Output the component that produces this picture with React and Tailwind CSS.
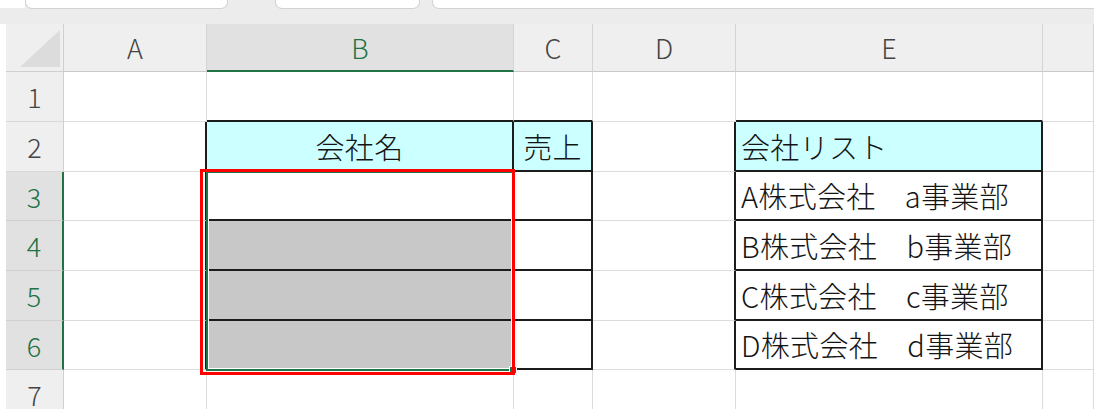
import React from 'react';

const COLS = [
  { key: 'A', width: 'w-[143px]' },
  { key: 'B', width: 'w-[307px]' },
  { key: 'C', width: 'w-[79px]' },
  { key: 'D', width: 'w-[143px]' },
  { key: 'E', width: 'w-[307px]' },
  { key: 'F', width: 'w-[51px]' },
];

const ROWS = [
  { n: 1, height: 'h-[50px]' },
  { n: 2, height: 'h-[50px]' },
  { n: 3, height: 'h-[49px]', selected: true },
  { n: 4, height: 'h-[50px]', selected: true },
  { n: 5, height: 'h-[50px]', selected: true },
  { n: 6, height: 'h-[49px]', selected: true },
  { n: 7, height: 'h-[50px]' },
];

// cells with a black right / bottom border
const BLACK_RIGHT = ['A2', 'A3', 'A4', 'A5', 'A6', 'B2', 'B3', 'B4', 'B5', 'B6', 'C2', 'C3', 'C4', 'C5', 'C6', 'D2', 'D3', 'D4', 'D5', 'D6', 'E2', 'E3', 'E4', 'E5', 'E6'];
const BLACK_BOTTOM = ['B1', 'C1', 'E1', 'B2', 'B3', 'B4', 'B5', 'B6', 'C2', 'C3', 'C4', 'C5', 'C6', 'E2', 'E3', 'E4', 'E5', 'E6'];

const CELLS = {
  B2: { text: '会社名', align: 'center', fill: 'bg-[#ccffff]' },
  C2: { text: '売上', align: 'center', fill: 'bg-[#ccffff]' },
  E2: { text: '会社リスト', align: 'left', fill: 'bg-[#ccffff]' },
  E3: { text: 'A株式会社　a事業部', align: 'left' },
  E4: { text: 'B株式会社　b事業部', align: 'left' },
  E5: { text: 'C株式会社　c事業部', align: 'left' },
  E6: { text: 'D株式会社　d事業部', align: 'left' },
  B4: { fill: 'bg-[#c8c8c8]' },
  B5: { fill: 'bg-[#c8c8c8]' },
  B6: { fill: 'bg-[#c8c8c8]' },
};

const Cell = ({ id, width }) => {
  const cell = CELLS[id] || {};
  const right = BLACK_RIGHT.includes(id) ? 'border-r-2 border-r-[#1c1c1c]' : 'border-r border-r-[#dcdcdc]';
  const bottom = BLACK_BOTTOM.includes(id) ? 'border-b-2 border-b-[#1c1c1c]' : 'border-b border-b-[#dcdcdc]';
  const align = cell.align === 'center' ? 'justify-center' : 'justify-start pl-[5px]';
  return (
    <div className={`${width} h-full shrink-0 flex items-center ${align} ${right} ${bottom} ${cell.fill || 'bg-white'}`}>
      {cell.text && <span className="text-[29px] font-light leading-none text-[#141414] whitespace-nowrap tracking-[0.3px]">{cell.text}</span>}
    </div>
  );
};

const Tabs = () => (
  <div className="flex h-[24px] items-start bg-[#ececec]">
    <div className="h-[8px] w-[25px] bg-white" />
    <div className="h-[9px] w-[203px] bg-white border-b border-l border-r border-[#d2d2d2] rounded-bl-[7px] rounded-br-[7px]" />
    <div className="w-[47px]" />
    <div className="h-[9px] w-[145px] bg-white border-b border-l border-r border-[#d2d2d2] rounded-bl-[7px] rounded-br-[7px]" />
    <div className="w-[12px]" />
    <div className="h-[9px] flex-1 bg-white border-b border-l border-[#d2d2d2] rounded-bl-[7px]" />
  </div>
);

const ColumnHeader = () => (
  <div className="flex h-[48px]">
    <div className="w-[6px] shrink-0 bg-white" />
    <div className="w-[58px] shrink-0 relative bg-[#efefef] border-r border-b border-[#cfcfcf]">
      <svg className="absolute left-0 top-0" width="58" height="48" viewBox="0 0 58 48">
        <polygon points="14,43 54,43 54,6" fill="#dcdcdc" />
      </svg>
    </div>
    {COLS.map(col => (
      col.key === 'B' ? (
        <div key={col.key} className={`${col.width} shrink-0 flex items-center justify-center bg-[#e1e1e1] border-r border-r-[#d4d4d4] border-b-2 border-b-[#217346]`}>
          <span className="text-[27px] font-light leading-none text-[#217346]">{col.key}</span>
        </div>
      ) : (
        <div key={col.key} className={`${col.width} shrink-0 flex items-center justify-center bg-[#efefef] border-r border-r-[#d4d4d4] border-b border-b-[#c9c9c9]`}>
          <span className="text-[27px] font-light leading-none text-[#444444]">{col.key === 'F' ? '' : col.key}</span>
        </div>
      )
    ))}
  </div>
);

const Row = ({ row }) => (
  <div className={`flex ${row.height}`}>
    <div className="w-[6px] shrink-0 bg-white" />
    {row.selected ? (
      <div className="w-[58px] shrink-0 flex items-center justify-center bg-[#e1e1e1] border-r-2 border-r-[#217346] border-b border-b-[#d0d0d0]">
        <span className="text-[27px] font-light leading-none text-[#217346]">{row.n}</span>
      </div>
    ) : (
      <div className="w-[58px] shrink-0 flex items-center justify-center bg-[#efefef] border-r border-r-[#cfcfcf] border-b border-b-[#d8d8d8]">
        <span className="text-[27px] font-light leading-none text-[#444444]">{row.n}</span>
      </div>
    )}
    {COLS.map(col => (
      <Cell key={col.key} id={`${col.key}${row.n}`} width={col.width} />
    ))}
  </div>
);

const App = () => {
  return (
    <div className="relative w-[1094px] h-[409px] overflow-hidden bg-white font-['Noto_Sans_CJK_JP','Noto_Sans',sans-serif]">
      <Tabs />
      <ColumnHeader />
      {ROWS.map(row => <Row key={row.n} row={row} />)}

      {/* selection B3:B6 */}
      <div className="absolute left-[206px] top-[171px] w-[308px] h-[200px] border-2 border-[#217346]">
        <div className="absolute inset-0 border border-white" />
      </div>
      <div className="absolute left-[509px] top-[366px] w-[8px] h-[8px] bg-[#217346] border border-white" />

      {/* red annotation box */}
      <div className="absolute left-[200px] top-[169px] w-[315px] h-[206px] border-[3px] border-[#ff0000]" />
    </div>
  );
};

export default App;
